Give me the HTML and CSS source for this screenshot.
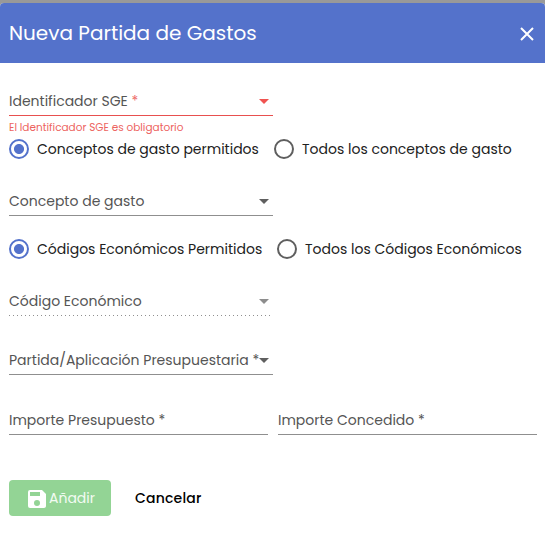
FILE: index.html
```html
<!DOCTYPE html>
<html lang="es">
<head>
<meta charset="utf-8">
<title>Nueva Partida de Gastos</title>
<link rel="stylesheet" href="styles.css">
</head>
<body>
<div class="dialog">
  <header class="header">
    <h1 class="title">Nueva Partida de Gastos</h1>
    <svg class="close" viewBox="0 0 14 14"><path d="M1 1 13 13M13 1 1 13" fill="none" stroke="#fff" stroke-width="2"/></svg>
  </header>
  <form class="form">
    <div class="field error"><span class="label">Identificador SGE <b class="req">*</b></span><i class="arrow"></i></div>
    <div class="hint">El Identificador SGE es obligatorio</div>
    <div class="radios">
      <span class="radio on"></span><span class="option o1">Conceptos de gasto permitidos</span>
      <span class="radio"></span><span class="option">Todos los conceptos de gasto</span>
    </div>
    <div class="field concept"><span class="label">Concepto de gasto</span><i class="arrow"></i></div>
    <div class="radios second">
      <span class="radio on"></span><span class="option o3">Códigos Económicos Permitidos</span>
      <span class="radio"></span><span class="option">Todos los Códigos Económicos</span>
    </div>
    <div class="field disabled"><span class="label">Código Económico</span><i class="arrow"></i></div>
    <div class="field budget"><span class="label">Partida/Aplicación Presupuestaria *</span><i class="arrow"></i></div>
    <div class="amounts">
      <div class="field"><span class="label">Importe Presupuesto *</span></div>
      <div class="field"><span class="label">Importe Concedido *</span></div>
    </div>
    <div class="actions">
      <button type="button" class="add"><svg class="save" viewBox="3 3 18 18"><path fill="#fff" d="M17 3H5a2 2 0 0 0-2 2v14a2 2 0 0 0 2 2h14c1.100 0 2-.9 2-2V7zm-5 16a3 3 0 1 1 0-6 3 3 0 0 1 0 6zm3-10H5V5h10z"/></svg><span>Añadir</span></button>
      <button type="button" class="cancel">Cancelar</button>
    </div>
  </form>
</div>
</body>
</html>
```
FILE: styles.css
```css
* { box-sizing: border-box; }
body {
  margin: 0;
  padding-top: 3px;
  background: #999;
  font-family: Poppins, Inter, sans-serif;
  font-size: 14px;
  color: #212121;
}
.dialog { height: 530px; background: #fff; border-radius: 4px 4px 0 0; overflow: hidden; }
.header {
  height: 60px;
  padding: 0 11px 0 9px;
  display: flex;
  align-items: center;
  justify-content: space-between;
  background: #5472cb;
  color: #fff;
}
.title { margin: 0; font-size: 20px; font-weight: 400; line-height: 32px; }
.close { width: 14px; height: 14px; margin-top: 2px; }
.form { padding: 25px 8px 0 9px; }
.field {
  width: 264px;
  height: 28px;
  padding-right: 4px;
  display: flex;
  align-items: center;
  justify-content: space-between;
  border-bottom: 1px solid #8f8f8f;
  color: #555;
}
.label { line-height: 20px; margin-bottom: 2px; white-space: pre; }
.arrow {
  flex: none;
  border: 5px solid transparent;
  border-top-color: #5f5f5f;
  border-bottom: 0;
}
.error { border-color: #e8504f; }
.error .arrow { border-top-color: #f05350; }
.req { color: #ed6a68; font-weight: 400; }
.hint { height: 14px; margin-top: 5px; font-size: 10.5px; line-height: 14px; color: #ed6360; }
.radios { height: 20px; margin-top: 4px; display: flex; align-items: center; white-space: nowrap; }
.radio { flex: none; width: 20px; height: 20px; border: 2px solid #5f5f5f; border-radius: 50%; }
.radio.on { border-color: #5472cb; background: radial-gradient(circle, #5472cb 4.6px, transparent 5.4px); }
.option { margin-left: 8px; }
.o1 { width: 237px; }
.o3 { width: 240px; }
.concept { margin-top: 29px; }
.second { margin-top: 23px; }
.disabled { margin-top: 29px; border-bottom: 0; padding-bottom: 1px; background: repeating-linear-gradient(90deg, #8f8f8f 0 1px, transparent 1px 4px) 0 100% / 262px 1px no-repeat; }
.disabled .arrow { border-top-color: #8d8d8d; }
.budget { margin-top: 31px; }
.amounts { margin-top: 32px; display: grid; grid-template-columns: 259px 259px; gap: 10px; }
.amounts .field { width: auto; }
.actions { margin-top: 45px; display: flex; gap: 24px; align-items: center; }
button { border: 0; margin: 0; padding: 0; font: inherit; }
.add { width: 102px; height: 36px; padding: 0 16px 0 19px; display: flex; align-items: center; gap: 3px; border-radius: 4px; background: #93d495; color: #f2fbf2; white-space: nowrap; }
.save { width: 18px; height: 18px; flex: none; margin-top: 2px; }
.cancel { background: none; color: #000; font-weight: 500; letter-spacing: .2px; }
```
